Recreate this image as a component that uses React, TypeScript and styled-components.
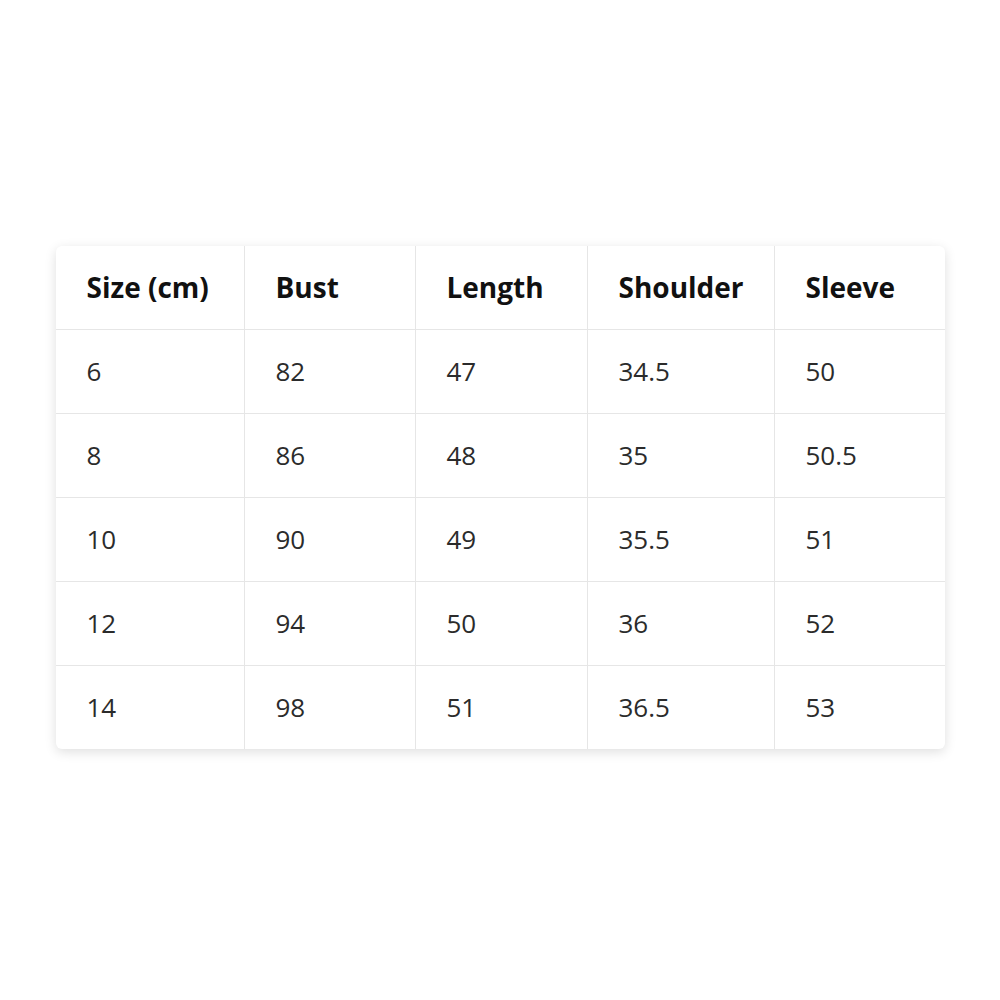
import React from "react";
import styled, { createGlobalStyle } from "styled-components";

const Global = createGlobalStyle`
  html, body { margin: 0; padding: 0; background: #ffffff; }
  body { font-family: "Open Sans", "Noto Sans", "Liberation Sans", sans-serif; }
`;

const Page = styled.div`
  min-height: 994px;
  display: flex;
  align-items: center;
  justify-content: center;
`;

const Card = styled.div`
  width: 889px;
  background: #ffffff;
  border-radius: 6px;
  box-shadow: 0 3px 12px rgba(0, 0, 0, 0.13);
  overflow: hidden;
`;

const Table = styled.table`
  width: 100%;
  table-layout: fixed;
  border-collapse: separate;
  border-spacing: 0;
`;

const Cell = styled.td<{ $head?: boolean; $lastRow?: boolean }>`
  padding: 26px 0 26px 31px;
  line-height: 31px;
  font-size: ${(p) => (p.$head ? "28px" : "26px")};
  font-weight: ${(p) => (p.$head ? 700 : 400)};
  color: ${(p) => (p.$head ? "#111111" : "#2b2b2b")};
  text-align: left;
  white-space: nowrap;
  border-right: 1px solid #e6e6e6;
  border-bottom: ${(p) => (p.$lastRow ? "none" : "1px solid #e6e6e6")};
  &:last-child {
    border-right: none;
  }
`;

const widths = [189, 171, 172, 187, 170];
const headers = ["Size (cm)", "Bust", "Length", "Shoulder", "Sleeve"];
const rows = [
  ["6", "82", "47", "34.5", "50"],
  ["8", "86", "48", "35", "50.5"],
  ["10", "90", "49", "35.5", "51"],
  ["12", "94", "50", "36", "52"],
  ["14", "98", "51", "36.5", "53"],
];

export default function App() {
  return (
    <>
      <Global />
      <Page>
        <Card>
          <Table>
            <colgroup>
              {widths.map((w, i) => (
                <col key={i} style={{ width: w }} />
              ))}
            </colgroup>
            <thead>
              <tr>
                {headers.map((h) => (
                  <Cell as="th" $head key={h}>
                    {h}
                  </Cell>
                ))}
              </tr>
            </thead>
            <tbody>
              {rows.map((r, ri) => (
                <tr key={ri}>
                  {r.map((c, ci) => (
                    <Cell key={ci} $lastRow={ri === rows.length - 1}>
                      {c}
                    </Cell>
                  ))}
                </tr>
              ))}
            </tbody>
          </Table>
        </Card>
      </Page>
    </>
  );
}
